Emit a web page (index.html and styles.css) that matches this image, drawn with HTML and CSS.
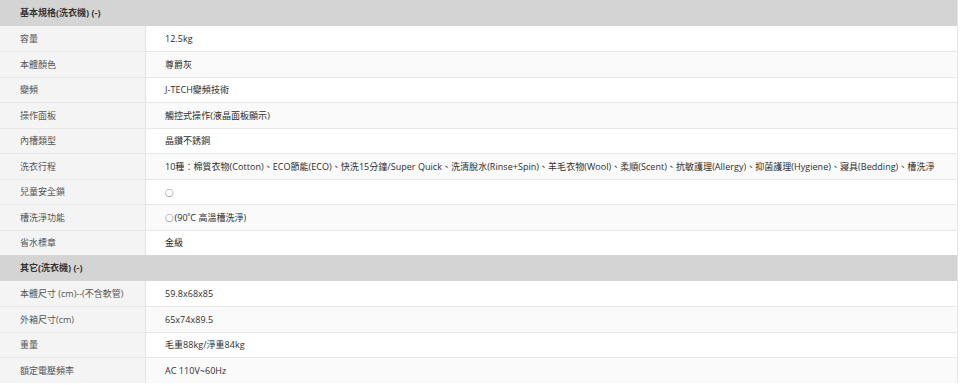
FILE: index.html
```html
<!DOCTYPE html>
<html lang="zh-Hant">
<head>
<meta charset="utf-8">
<link rel="stylesheet" href="styles.css">
</head>
<body>
<div class="spec">
  <div class="sec">基本規格(洗衣機) (-)</div>
  <div class="row"><div class="k">容量</div><div class="v">12.5kg</div></div>
  <div class="row alt"><div class="k">本體顏色</div><div class="v">尊爵灰</div></div>
  <div class="row"><div class="k">變頻</div><div class="v">J-TECH變頻技術</div></div>
  <div class="row alt"><div class="k">操作面板</div><div class="v">觸控式操作(液晶面板顯示)</div></div>
  <div class="row"><div class="k">內槽類型</div><div class="v">晶鑽不銹鋼</div></div>
  <div class="row alt"><div class="k">洗衣行程</div><div class="v">10種：棉質衣物(Cotton)、ECO節能(ECO)、快洗15分鐘/Super Quick、洗清脫水(Rinse+Spin)、羊毛衣物(Wool)、柔順(Scent)、抗敏護理(Allergy)、抑菌護理(Hygiene)、寢具(Bedding)、槽洗淨</div></div>
  <div class="row"><div class="k">兒童安全鎖</div><div class="v"><span class="mark">○</span></div></div>
  <div class="row alt"><div class="k">槽洗淨功能</div><div class="v"><span class="mark">○</span>(90˚C 高溫槽洗淨)</div></div>
  <div class="row"><div class="k">省水標章</div><div class="v">金級</div></div>
  <div class="sec">其它(洗衣機) (-)</div>
  <div class="row"><div class="k">本體尺寸 (cm)--(不含軟管)</div><div class="v">59.8x68x85</div></div>
  <div class="row alt"><div class="k">外箱尺寸(cm)</div><div class="v">65x74x89.5</div></div>
  <div class="row"><div class="k">重量</div><div class="v">毛重88kg/淨重84kg</div></div>
  <div class="row alt"><div class="k">額定電壓頻率</div><div class="v">AC 110V~60Hz</div></div>
</div>
</body>
</html>
```
FILE: styles.css
```css
html, body {
  margin: 0;
  padding: 0;
  background: #ffffff;
}
body {
  font-family: "Open Sans", "Noto Sans CJK TC", sans-serif;
  font-size: 9px;
  color: #333333;
}
.spec {
  width: 958px;
  border-right: 1px solid #e6e6e6;
  box-sizing: border-box;
}
.sec {
  height: 25.5px;
  display: flex;
  align-items: center;
  padding-left: 20px;
  background: #d4d4d4;
  font-weight: bold;
  color: #333333;
  box-sizing: border-box;
}
.row {
  height: 25.5px;
  display: grid;
  grid-template-columns: 146px 1fr;
  border-top: 1px solid #e7e7e7;
  box-sizing: border-box;
}
.sec + .row {
  border-top: none;
}
.k {
  display: flex;
  align-items: center;
  padding-left: 20px;
  background: #f4f4f4;
  border-right: 1px solid #e4e4e4;
  color: #555555;
  white-space: nowrap;
}
.v {
  display: flex;
  align-items: center;
  padding-left: 19px;
  background: #ffffff;
  color: #2e2e2e;
  white-space: nowrap;
  letter-spacing: 0.04px;
}
.alt .v {
  background: #fafafa;
}
.mark {
  font-size: 8.5px;
  margin-right: 1px;
}
```
